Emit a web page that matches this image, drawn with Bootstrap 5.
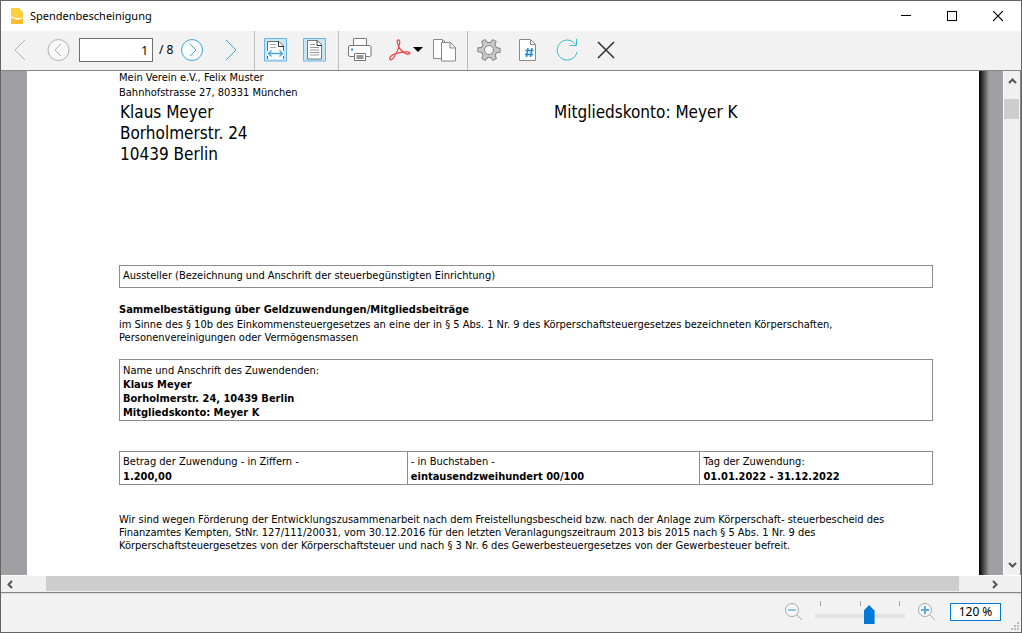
<!DOCTYPE html>
<html lang="de">
<head>
<meta charset="utf-8">
<meta name="viewport" content="width=device-width, initial-scale=1">
<title>Spendenbescheinigung</title>
<link rel="stylesheet" href="https://cdn.jsdelivr.net/npm/bootstrap@5.3.0/dist/css/bootstrap.min.css">
<style>
  body { font-family: "Noto Sans", "Open Sans", sans-serif; font-size: 12px; line-height: 16px; color: #000; background: #f2f2f2; }
  button, input { font-family: inherit; font-size: inherit; }
  svg { display: block; flex: none; }
  .window { border: 1px solid #646464; }
  .titlebar { height: 30px; background: #fff; }
  .window-title { font-size: 11px; margin-left: 5px; }
  .caption-btn { width: 46px; height: 30px; }
  .plain-btn { border: 0; padding: 0; background: none; display: flex; align-items: center; justify-content: center; border-radius: 0; flex: none; }
  .toolbar { height: 40px; background: #f2f2f2; border-bottom: 1px solid #84848f; }
  .tool { width: 39px; height: 38px; }
  .tool-back { width: 38px; }
  .tool-menu { width: 46px; gap: 2px; justify-content: end; padding-right: 2px; }
  .divider { width: 1px; height: 39px; margin: 0 1px 0 4px; background: #bdbdbd; flex: none; }
  .divider-close { margin: 0 1px 0 3px; }
  .page-no { width: 74px; height: 24px; margin: 7px 0 0 2px; border: 1px solid #707070; text-align: right; padding: 0 4px; background: #fff; }
  .page-total { width: 19px; padding-left: 6px; margin-top: 11px; white-space: nowrap; }
  .desk { background: #a09fa4; padding-left: 26px; min-height: 0; }
  .sheet { background: #fff; padding: 0 46px 0 92px; min-width: 0; }
  .shade { width: 10px; background: linear-gradient(90deg, #000, #222 20%, #8c8b90 90%, #a09fa4); flex: none; }
  .gutter { width: 14px; flex: none; }
  .vbar { width: 18px; background: #f0f0f0; border-left: 1px solid #fff; border-right: 1px solid #84848f; flex: none; }
  .vbar .thumb { height: 20px; width: 15px; background: #cdcdcd; margin-top: 8px; }
  .hbar { height: 18px; background: #f0f0f0; border-top: 1px solid #fff; border-bottom: 1px solid #84848f; }
  .hbar .thumb { background: #cdcdcd; height: 15px; margin: 0 27px 0 28px; }
  .step-h { width: 17px; }
  .step-end { margin-right: 18px; }
  .step-v { height: 20px; }
  .doc { font-family: "DejaVu Sans Condensed", "DejaVu Sans", sans-serif; font-size: 11px; line-height: 13px; }
  .sender { line-height: 15px; margin-top: -1px; }
  .address { font-size: 17px; line-height: 21px; margin-top: 2px; padding-left: 1px; }
  .address > div { width: 434px; flex: none; }
  .issuer { margin-top: 100px; border: 1px solid #8c8c8c; padding: 3px 3px 5px; }
  .subject { margin-top: 14px; line-height: 15px; font-size: 11px; margin-bottom: 1px; font-weight: 700; }
  .donor { border: 1px solid #8c8c8c; padding: 4px 3px 0; margin-top: 15px; line-height: 14px; }
  .amounts { width: 100%; margin-top: 30px; line-height: 15px; border: 1px solid #8c8c8c; }
  .amounts th, .amounts td { padding: 0 3px; border-left: 1px solid #8c8c8c; }
  .amounts th { font-weight: 400; padding-top: 2px; }
  .amounts td { font-weight: 700; }
  .notice { margin-top: 28px; }
  .statusbar { height: 39px; background: #f2f2f2; border-top: 1px solid #dcdcdc; padding-bottom: 3px; position: relative; }
  .zoomer { width: 90px; height: 36px; margin: 0 12px 0 13px; display: block; background: linear-gradient(#e0e4e4, #e0e4e4) 0 20px / 100% 4px no-repeat, linear-gradient(#a8a898, #a8a898) 5px 7px / 1px 5px no-repeat, linear-gradient(#a8a898, #a8a898) 45px 7px / 1px 5px no-repeat, linear-gradient(#a8a898, #a8a898) 84px 7px / 1px 5px no-repeat; -webkit-appearance: none; appearance: none; }
  .zoomer::-webkit-slider-thumb { -webkit-appearance: none; width: 11px; height: 19px; margin-top: 6px; background: #0078d7; clip-path: polygon(50% 0, 100% 30%, 100% 100%, 0 100%, 0 30%); }
  .zoom-value { width: 51px; height: 18px; border: 1px solid #0078d7; background: #fff; text-align: center; padding: 0; margin: 0 20px 0 14px; }
  .grip { position: absolute; right: 1px; bottom: 1px; }
</style>
</head>
<body>
<div class="window d-flex flex-column vh-100">
  <header class="titlebar d-flex align-items-center flex-shrink-0">
    <svg class="ms-2" width="16" height="18" viewBox="0 0 16 18"><path d="M2 1h8l4 4v5q-6 3-12-1z" fill="#ffcf3d"/><path d="M2 10.500q6 4 12 .5v6H2z" fill="#fdbd30"/></svg>
    <span class="window-title me-auto">Spendenbescheinigung</span>
    <button class="plain-btn caption-btn" aria-label="Minimieren"><svg width="10" height="11" shape-rendering="crispEdges"><path d="M0 4.500h10" stroke="#000"/></svg></button>
    <button class="plain-btn caption-btn" aria-label="Maximieren"><svg width="10" height="11" shape-rendering="crispEdges"><path d="M.5.5h9v9h-9z" stroke="#000" fill="none"/></svg></button>
    <button class="plain-btn caption-btn" aria-label="Schließen"><svg width="10" height="11"><path d="M0 0l10 10M10 0L0 10" stroke="#000" stroke-width="1.200"/></svg></button>
  </header>

  <nav class="toolbar d-flex align-items-start flex-shrink-0" aria-label="Werkzeuge">
    <button class="plain-btn tool tool-back" aria-label="Erste Seite"><svg width="24" height="24" fill="none" stroke="#b0b0b0"><path d="M17 2L7 12l10 10"/></svg></button>
    <button class="plain-btn tool tool-back" aria-label="Vorige Seite"><svg width="24" height="24" fill="none" stroke="#b0b0b0"><circle cx="12.500" cy="12" r="10.500" fill="#f8f8f8"/><path d="M15 6l-6 6 6 6"/></svg></button>
    <input class="page-no" type="text" value="1" aria-label="Seite">
    <span class="page-total">/ 8</span>
    <button class="plain-btn tool" aria-label="Nächste Seite"><svg width="24" height="24" fill="none" stroke="#45a3d9"><circle cx="12" cy="12" r="10.500" fill="#fafdff"/><path d="M10 6l6 6-6 6"/></svg></button>
    <button class="plain-btn tool" aria-label="Letzte Seite"><svg width="24" height="24" fill="none" stroke="#45a3d9"><path d="M7 2l10 10L7 22"/></svg></button>
    <span class="divider"></span>
    <button class="plain-btn tool" aria-label="Seitenbreite"><svg width="23" height="24" fill="none"><path d="M.5.5h22v22.500H.5z" fill="#c9e6f7" stroke="#68b5e3"/><path d="M3 3h12l4.500 4.500V21H3z" fill="#fff"/><path d="M3.500 13V3.500H15l4.500 4.500v5M3.500 18v3M19.500 18v3" stroke="#666"/><path d="M14.500 3v5.500H20" stroke="#333"/><path d="M6 6.500h6M6 9.500h6" stroke="#aaa"/><path d="M4 15.500h15M7.500 12.500l-3 3 3 3M15.500 12.500l3 3-3 3" stroke="#45a3d9" stroke-width="1.300"/></svg></button>
    <button class="plain-btn tool" aria-label="Ganze Seite"><svg width="23" height="24" fill="none"><path d="M.5.5h22v22.500H.5z" fill="#c9e6f7" stroke="#68b5e3"/><path d="M4.500 2.500h10l4 4V21h-14z" fill="#fff" stroke="#777"/><path d="M14 2.500v5h5" stroke="#333"/><path d="M7 6.500h5M7 9.500h9M7 12h9M7 14.500h9M7 17h9" stroke="#999"/></svg></button>
    <span class="divider"></span>
    <button class="plain-btn tool" aria-label="Drucken"><svg width="24" height="24" fill="#fff" stroke="#777"><path d="M5.500.5h13v9h-13z"/><rect x=".5" y="7.500" width="22.500" height="11" rx="1.500"/><path d="M6.500 15.500h11v7h-11z"/><path d="M8.500 18h7M8.500 20h7" stroke-width="1.500"/><path d="M3 11.500h2" stroke="#2795dc" stroke-width="2"/></svg></button>
    <button class="plain-btn tool tool-menu" aria-label="PDF erzeugen"><svg width="22" height="24" fill="none" stroke="#ed4148" stroke-width="1.200"><path d="M10 9.500C9.500 7 7 3.500 8.500 2.200c1.500-1 2.800.8 2 3.800-.8 4.500-2.500 8.500-5 12.500C4 21 2 22.500 1 21.500c-1.200-1.500 1-4 4.500-5.500 4-1.600 8-2.200 12.500-2.200 2.500 0 3.500 1 2.500 2-1.500 1.300-4.500-.3-6.500-2-2-1.600-3.300-2.800-4-4.300z"/></svg><svg width="10" height="6"><path d="M0 0h10L5 5z"/></svg></button>
    <button class="plain-btn tool" aria-label="Kopieren"><svg width="24" height="24" fill="#fff" stroke="#888"><path d="M.5 1.500h9l4 4v15H.5zM9.500 1.500v4h4"/><path d="M8.500 4.500h9l5 5V23h-14zM17 4.500v5.500h5.500"/></svg></button>
    <span class="divider divider-close"></span>
    <button class="plain-btn tool" aria-label="Einstellungen"><svg width="24" height="24" viewBox="0 0 24 24" fill="#c9c9c9" stroke="#858585"><g transform="rotate(30 12 12)"><path d="M10.200 1h3.600l.8 3.700 2.600 1.500 3.600-1.200 1.900 3.200-2.900 2.400v2.800l2.900 2.400-1.900 3.200-3.600-1.200-2.600 1.500-.8 3.700h-3.600l-.8-3.700-2.600-1.500L3.200 19l-1.900-3.200 2.900-2.400v-2.800L1.300 8.200 3.200 5l3.600 1.200 2.600-1.500z"/></g><circle cx="12" cy="12" r="4.500" fill="#f6f6f6"/></svg></button>
    <button class="plain-btn tool" aria-label="Seitennummern"><svg width="24" height="24"><path d="M3.500 1.500h11l5 5V22.500h-16z" fill="#fff" stroke="#888"/><path d="M14.500 1.500v5h5" fill="none" stroke="#888"/><path d="M12 10l-1.500 9M16 10l-1.500 9M9.500 12.500h8M9 16.500h8" stroke="#1e86d0" stroke-width="1.500"/></svg></button>
    <button class="plain-btn tool" aria-label="Aktualisieren"><svg width="24" height="24" fill="none" stroke="#3bb9cf"><path d="M20.500 6.500A10 10 0 1 0 22 14M21.500 1v6.500H15"/></svg></button>
    <button class="plain-btn tool" aria-label="Abbrechen"><svg width="24" height="24" fill="none" stroke="#333" stroke-width="1.600"><path d="M4 4l16 16M20 4L4 20"/></svg></button>
  </nav>

  <div class="d-flex flex-fill overflow-hidden">
    <main class="desk d-flex flex-fill overflow-hidden">
      <article class="sheet doc flex-fill">
        <div class="sender">Mein Verein e.V., Felix Muster<br>Bahnhofstrasse 27, 80331 München</div>
        <div class="address d-flex"><div>Klaus Meyer<br>Borholmerstr. 24<br>10439 Berlin</div><span class="text-nowrap">Mitgliedskonto: Meyer K</span></div>
        <div class="issuer">Aussteller (Bezeichnung und Anschrift der steuerbegünstigten Einrichtung)</div>
        <h1 class="subject">Sammelbestätigung über Geldzuwendungen/Mitgliedsbeiträge</h1>
        <div>im Sinne des § 10b des Einkommensteuergesetzes an eine der in § 5 Abs. 1 Nr. 9 des Körperschaftsteuergesetzes bezeichneten Körperschaften,<br>Personenvereinigungen oder Vermögensmassen</div>
        <div class="donor">Name und Anschrift des Zuwendenden:<br><b>Klaus Meyer<br>Borholmerstr. 24, 10439 Berlin<br>Mitgliedskonto: Meyer K</b></div>
        <table class="amounts">
          <colgroup><col style="width:35.4%"><col style="width:36%"><col></colgroup>
          <tr><th scope="col">Betrag der Zuwendung - in Ziffern -</th><th scope="col">- in Buchstaben -</th><th scope="col">Tag der Zuwendung:</th></tr>
          <tr><td>1.200,00</td><td>eintausendzweihundert 00/100</td><td>01.01.2022 - 31.12.2022</td></tr>
        </table>
        <div class="notice">Wir sind wegen Förderung der Entwicklungszusammenarbeit nach dem Freistellungsbescheid bzw. nach der Anlage zum Körperschaft- steuerbescheid des<br>Finanzamtes Kempten, StNr. 127/111/20031, vom 30.12.2016 für den letzten Veranlagungszeitraum 2013 bis 2015 nach § 5 Abs. 1 Nr. 9 des<br>Körperschaftsteuergesetzes von der Körperschaftsteuer und nach § 3 Nr. 6 des Gewerbesteuergesetzes von der Gewerbesteuer befreit.</div>
      </article>
      <div class="shade"></div>
      <div class="gutter"></div>
    </main>
    <div class="vbar d-flex flex-column">
      <button class="plain-btn step-v w-100" aria-label="Nach oben"><svg width="9" height="6" fill="none" stroke="#555" stroke-width="2"><path d="M1 5l3.500-3.500L8 5"/></svg></button>
      <div class="thumb"></div>
      <button class="plain-btn step-v w-100 mt-auto" aria-label="Nach unten"><svg width="9" height="6" fill="none" stroke="#555" stroke-width="2"><path d="M1 1l3.500 3.500L8 1"/></svg></button>
    </div>
  </div>
  <div class="hbar d-flex flex-shrink-0">
    <button class="plain-btn step-h" aria-label="Nach links"><svg width="6" height="9" fill="none" stroke="#555" stroke-width="2"><path d="M5 1L1.500 4.500 5 8"/></svg></button>
    <div class="thumb flex-fill"></div>
    <button class="plain-btn step-h step-end" aria-label="Nach rechts"><svg width="6" height="9" fill="none" stroke="#555" stroke-width="2"><path d="M1 1l3.500 3.500L1 8"/></svg></button>
  </div>

  <footer class="statusbar d-flex align-items-center justify-content-end flex-shrink-0">
    <button class="plain-btn" aria-label="Verkleinern"><svg width="18" height="19" fill="none" stroke="#a8a8a8"><circle cx="8" cy="8" r="6.500" fill="#f8f8f8"/><path d="M12.500 12.500l5.500 5.500"/><path d="M4 8h8" stroke="#8cc4e6" stroke-width="2"/></svg></button>
    <input class="zoomer" type="range" min="0" max="200" value="123" aria-label="Zoom">
    <button class="plain-btn" aria-label="Vergrößern"><svg width="19" height="19" fill="none" stroke="#a8a8a8"><circle cx="8" cy="8" r="6.500" fill="#f8f8f8"/><path d="M12.500 12.500l5.500 5.500"/><path d="M4 8h8M8 4v8" stroke="#5aaee0" stroke-width="2"/></svg></button>
    <input class="zoom-value" type="text" value="120 %" aria-label="Zoomfaktor">
    <svg class="grip" width="9" height="9" fill="#bdbdbd"><path d="M6 0h2v2H6zM3 3h2v2H3zM6 3h2v2H6zM0 6h2v2H0zM3 6h2v2H3zM6 6h2v2H6z"/></svg>
  </footer>
</div>
<script src="https://cdn.jsdelivr.net/npm/bootstrap@5.3.0/dist/js/bootstrap.bundle.min.js"></script>
</body>
</html>
